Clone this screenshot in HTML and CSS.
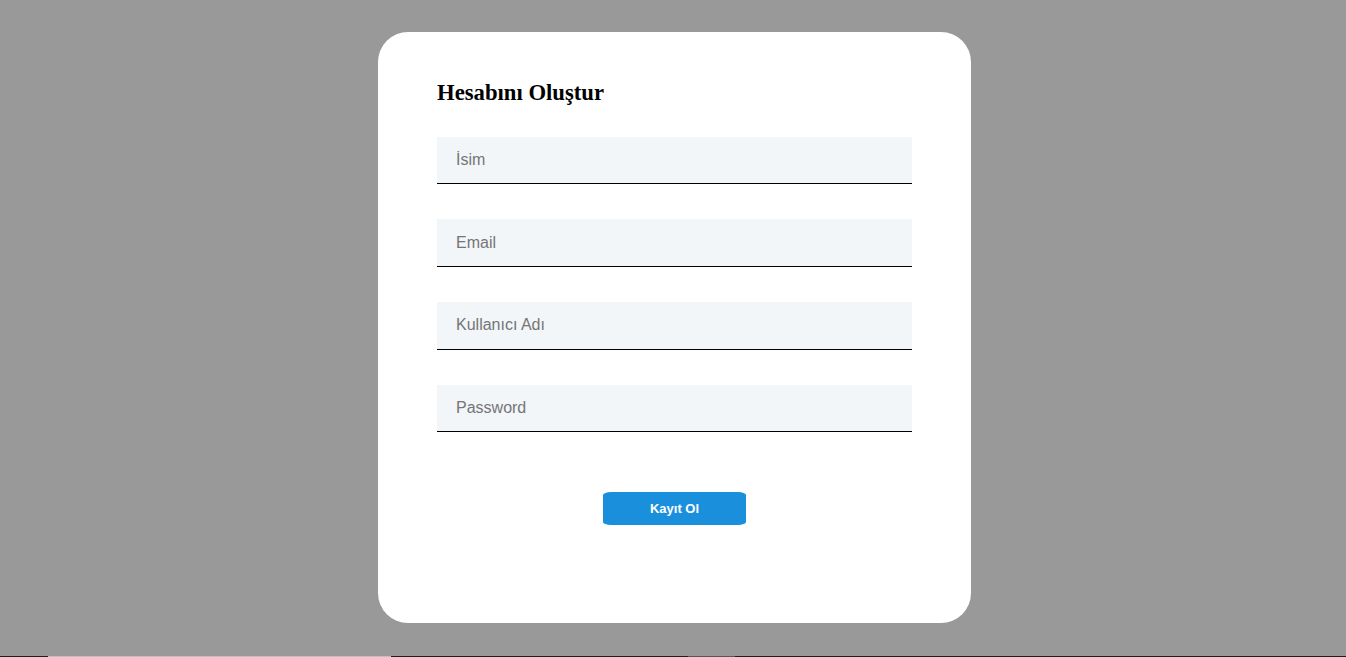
FILE: index.html
```html
<!DOCTYPE html>
<html lang="tr">
<head>
<meta charset="utf-8">
<title>Hesabını Oluştur</title>
<link rel="stylesheet" href="styles.css">
</head>
<body>
<div class="overlay">
  <form class="card">
    <h2 class="title">Hesabını Oluştur</h2>
    <div class="fields">
      <input class="field" type="text" placeholder="İsim">
      <input class="field" type="email" placeholder="Email">
      <input class="field" type="text" placeholder="Kullanıcı Adı">
      <input class="field" type="password" placeholder="Password">
    </div>
    <div class="actions">
      <button class="btn" type="button">Kayıt Ol</button>
    </div>
  </form>
</div>
<div class="strip">
  <span class="seg dark s1"></span>
  <span class="seg light s2"></span>
  <span class="seg dark s3"></span>
  <span class="seg mid s4"></span>
  <span class="seg dark s5"></span>
</div>
</body>
</html>
```
FILE: styles.css
```css
html, body {
  margin: 0;
  padding: 0;
  background: #999999;
  overflow: hidden;
}
.overlay {
  height: 656px;
  display: flex;
  justify-content: center;
  align-items: flex-start;
  padding-top: 32px;
  padding-left: 3px;
  box-sizing: border-box;
}
.card {
  width: 593px;
  height: 591px;
  flex: none;
  box-sizing: border-box;
  background: #ffffff;
  border-radius: 30px;
  padding: 0 59px;
  display: flex;
  flex-direction: column;
}
.title {
  font-family: "Liberation Serif", "Times New Roman", serif;
  font-weight: bold;
  font-size: 22.7px;
  color: #000;
  margin: 47px 0 29.6px;
  line-height: 28px;
}
.fields {
  display: flex;
  flex-direction: column;
  gap: 35px;
}
.field {
  display: block;
  width: 100%;
  height: 47.7px;
  box-sizing: border-box;
  border: none;
  border-bottom: 1px solid #000;
  background: #f2f6f9;
  padding: 0 19px;
  font-family: "Liberation Sans", Arial, sans-serif;
  font-size: 16px;
  color: #333;
  outline: none;
}
.field::placeholder {
  color: #757575;
}
.actions {
  display: flex;
  justify-content: center;
  margin-top: 59.5px;
}
.btn {
  width: 143px;
  height: 33px;
  border: none;
  background: #1a90dc;
  color: #fff;
  font-family: "Liberation Sans", Arial, sans-serif;
  font-weight: bold;
  font-size: 13px;
  border-radius: 8px / 3px;
  cursor: pointer;
}
.strip {
  display: flex;
  height: 1px;
}
.seg { display: block; height: 1px; }
.dark { background: #1e1e1e; }
.light { background: #c0c0c0; }
.mid { background: #555; }
.s1 { width: 48px; }
.s2 { width: 343px; }
.s3 { width: 297px; }
.s4 { width: 47px; }
.s5 { flex: 1; }
```
